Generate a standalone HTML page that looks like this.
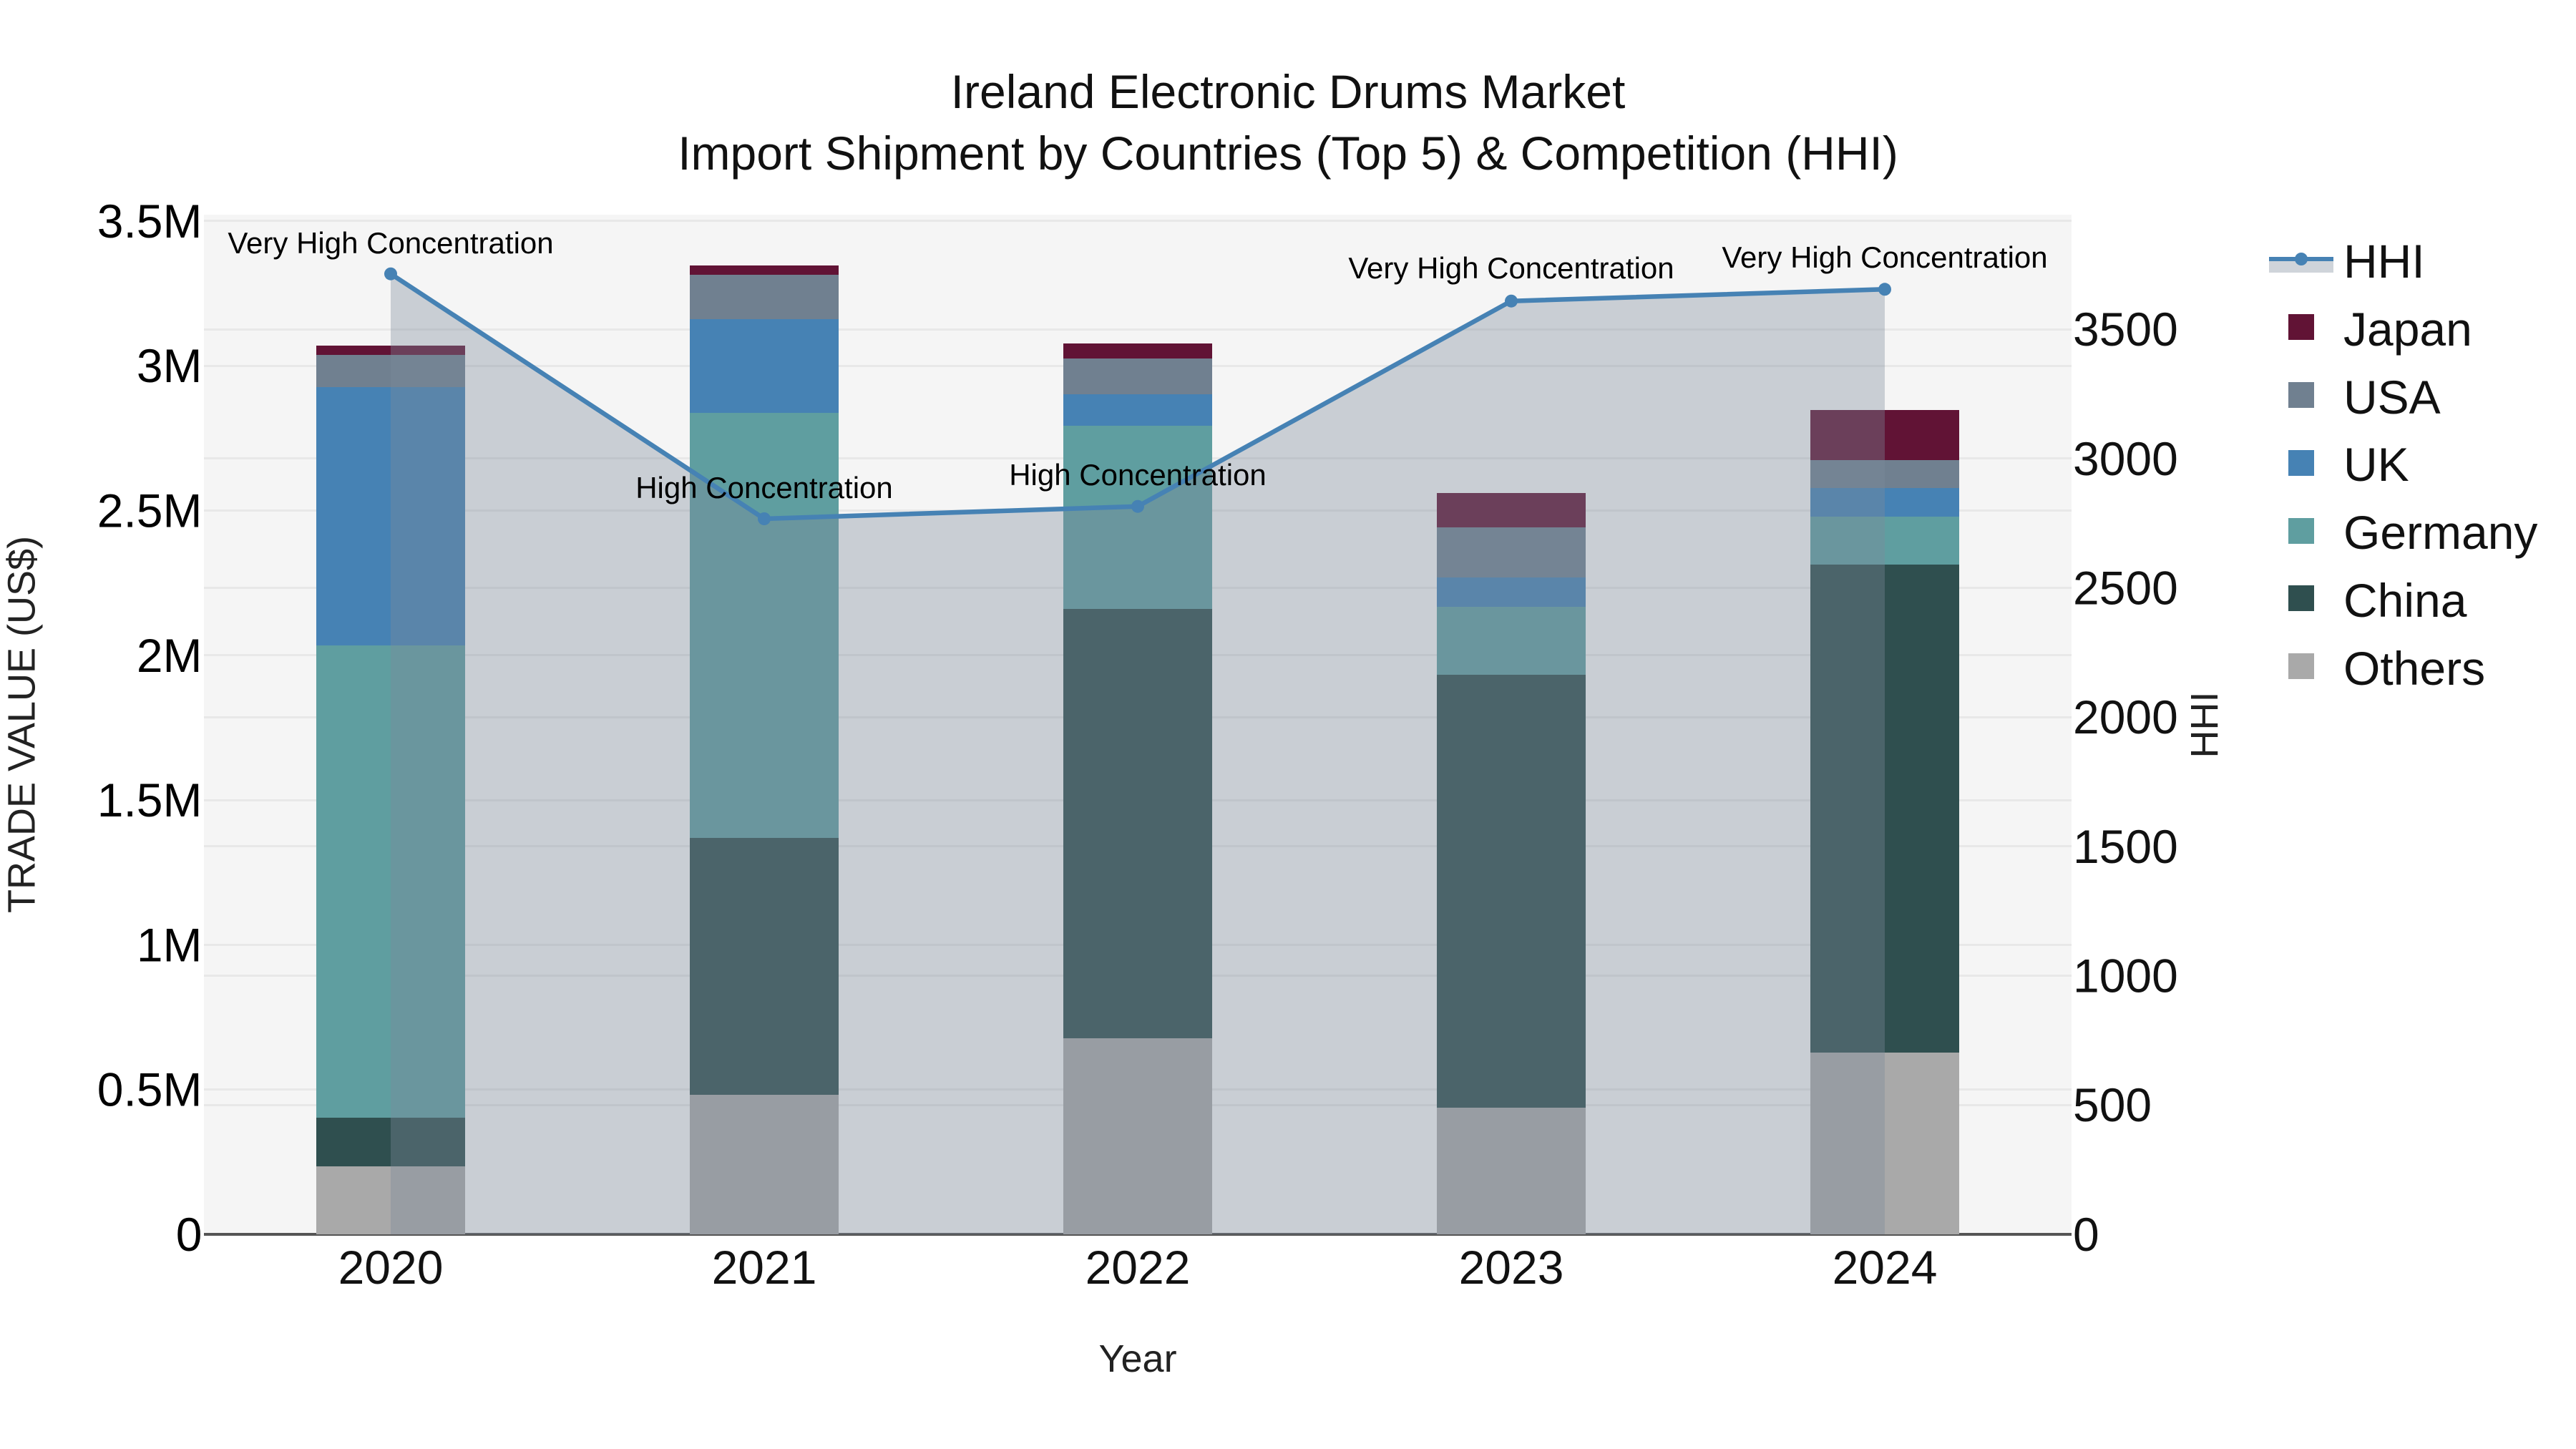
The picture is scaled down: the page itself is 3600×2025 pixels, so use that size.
<!DOCTYPE html>
<html>
<head>
<meta charset="utf-8">
<style>
html,body{margin:0;padding:0;background:#fff;width:3600px;height:2025px;overflow:hidden}
svg{display:block}
text{font-family:"Liberation Sans",Arial,sans-serif}
.t{font-size:66px;fill:#111}
.l{font-size:66px;fill:#000;text-anchor:end}
.r{font-size:66px;fill:#111}
.x{font-size:66px;fill:#111;text-anchor:middle}
.a{font-size:42px;fill:#000;text-anchor:middle}
.at{font-size:54px;fill:#222;text-anchor:middle}
.g{fill:#e8e8e8}
</style>
</head>
<body>
<svg width="3600" height="2025" viewBox="0 0 3600 2025" xmlns="http://www.w3.org/2000/svg">
<rect width="3600" height="2025" fill="#fff"/>
<rect x="285" y="300" width="2610" height="1425" fill="#f5f5f5"/>

<!-- gridlines -->
<g class="g">
<rect x="285" y="1521" width="2610" height="3"/>
<rect x="285" y="1319" width="2610" height="3"/>
<rect x="285" y="1117" width="2610" height="3"/>
<rect x="285" y="914" width="2610" height="3"/>
<rect x="285" y="712" width="2610" height="3"/>
<rect x="285" y="510" width="2610" height="3"/>
<rect x="285" y="307" width="2610" height="3"/>
<rect x="285" y="1543" width="2610" height="3"/>
<rect x="285" y="1362" width="2610" height="3"/>
<rect x="285" y="1181" width="2610" height="3"/>
<rect x="285" y="1001" width="2610" height="3"/>
<rect x="285" y="820" width="2610" height="3"/>
<rect x="285" y="639" width="2610" height="3"/>
<rect x="285" y="459" width="2610" height="3"/>
</g>
<rect x="285" y="1723" width="2610" height="4" fill="#555"/>

<!-- bars -->
<g shape-rendering="crispEdges">
<!-- 2020 -->
<rect x="442" y="483" width="208" height="13" fill="#611335"/>
<rect x="442" y="496" width="208" height="45" fill="#708090"/>
<rect x="442" y="541" width="208" height="361" fill="#4682b4"/>
<rect x="442" y="902" width="208" height="660" fill="#5f9ea0"/>
<rect x="442" y="1562" width="208" height="68" fill="#2f4f4f"/>
<rect x="442" y="1630" width="208" height="95" fill="#a9a9a9"/>
<!-- 2021 -->
<rect x="964" y="371" width="208" height="13" fill="#611335"/>
<rect x="964" y="384" width="208" height="62" fill="#708090"/>
<rect x="964" y="446" width="208" height="131" fill="#4682b4"/>
<rect x="964" y="577" width="208" height="594" fill="#5f9ea0"/>
<rect x="964" y="1171" width="208" height="359" fill="#2f4f4f"/>
<rect x="964" y="1530" width="208" height="195" fill="#a9a9a9"/>
<!-- 2022 -->
<rect x="1486" y="480" width="208" height="21" fill="#611335"/>
<rect x="1486" y="501" width="208" height="50" fill="#708090"/>
<rect x="1486" y="551" width="208" height="44" fill="#4682b4"/>
<rect x="1486" y="595" width="208" height="256" fill="#5f9ea0"/>
<rect x="1486" y="851" width="208" height="600" fill="#2f4f4f"/>
<rect x="1486" y="1451" width="208" height="274" fill="#a9a9a9"/>
<!-- 2023 -->
<rect x="2008" y="689" width="208" height="48" fill="#611335"/>
<rect x="2008" y="737" width="208" height="70" fill="#708090"/>
<rect x="2008" y="807" width="208" height="41" fill="#4682b4"/>
<rect x="2008" y="848" width="208" height="95" fill="#5f9ea0"/>
<rect x="2008" y="943" width="208" height="605" fill="#2f4f4f"/>
<rect x="2008" y="1548" width="208" height="177" fill="#a9a9a9"/>
<!-- 2024 -->
<rect x="2530" y="573" width="208" height="70" fill="#611335"/>
<rect x="2530" y="643" width="208" height="39" fill="#708090"/>
<rect x="2530" y="682" width="208" height="40" fill="#4682b4"/>
<rect x="2530" y="722" width="208" height="67" fill="#5f9ea0"/>
<rect x="2530" y="789" width="208" height="682" fill="#2f4f4f"/>
<rect x="2530" y="1471" width="208" height="254" fill="#a9a9a9"/>
</g>

<!-- HHI area and line -->
<polygon points="546,1725 546,382.7 1068,725 1590,707.7 2112,420.7 2634,404.3 2634,1725" fill="rgb(126,138,154)" fill-opacity="0.37"/>
<polyline points="546,382.7 1068,725 1590,707.7 2112,420.7 2634,404.3" fill="none" stroke="#4682b4" stroke-width="6.5" stroke-linejoin="round"/>
<g fill="#4682b4">
<circle cx="546" cy="382.7" r="9"/>
<circle cx="1068" cy="725" r="9"/>
<circle cx="1590" cy="707.7" r="9"/>
<circle cx="2112" cy="420.7" r="9"/>
<circle cx="2634" cy="404.3" r="9"/>
</g>

<!-- annotations -->
<text class="a" x="546" y="354">Very High Concentration</text>
<text class="a" x="1068" y="696">High Concentration</text>
<text class="a" x="1590" y="678">High Concentration</text>
<text class="a" x="2112" y="389">Very High Concentration</text>
<text class="a" x="2634" y="374">Very High Concentration</text>

<!-- title -->
<text class="t" x="1800" y="151" style="text-anchor:middle">Ireland Electronic Drums Market</text>
<text class="t" x="1800" y="237" style="text-anchor:middle">Import Shipment by Countries (Top 5) &amp; Competition (HHI)</text>

<!-- left ticks -->
<text class="l" x="282.5" y="332">3.5M</text>
<text class="l" x="282.5" y="534">3M</text>
<text class="l" x="282.5" y="736.5">2.5M</text>
<text class="l" x="282.5" y="939">2M</text>
<text class="l" x="282.5" y="1141">1.5M</text>
<text class="l" x="282.5" y="1343.5">1M</text>
<text class="l" x="282.5" y="1545.5">0.5M</text>
<text class="l" x="282.5" y="1748">0</text>

<!-- right ticks -->
<text class="r" x="2897" y="483">3500</text>
<text class="r" x="2897" y="664">3000</text>
<text class="r" x="2897" y="844.5">2500</text>
<text class="r" x="2897" y="1025">2000</text>
<text class="r" x="2897" y="1206">1500</text>
<text class="r" x="2897" y="1386.5">1000</text>
<text class="r" x="2897" y="1567">500</text>
<text class="r" x="2897" y="1748">0</text>

<!-- x ticks -->
<text class="x" x="546" y="1794">2020</text>
<text class="x" x="1068" y="1794">2021</text>
<text class="x" x="1590" y="1794">2022</text>
<text class="x" x="2112" y="1794">2023</text>
<text class="x" x="2634" y="1794">2024</text>

<!-- axis titles -->
<text class="at" x="1590" y="1917">Year</text>
<text class="at" transform="translate(48.5 1012.5) rotate(-90)">TRADE VALUE (US$)</text>
<text class="at" transform="translate(3099 1013) rotate(-90)">HHI</text>

<!-- legend -->
<rect x="3171" y="362" width="90" height="19" fill="rgb(126,138,154)" fill-opacity="0.37"/>
<rect x="3171" y="359" width="90" height="6" fill="#4682b4"/>
<circle cx="3216" cy="362" r="9" fill="#4682b4"/>
<text class="r" x="3275" y="388">HHI</text>
<g shape-rendering="crispEdges">
<rect x="3198" y="439" width="36" height="36" fill="#611335"/>
<rect x="3198" y="534" width="36" height="36" fill="#708090"/>
<rect x="3198" y="629" width="36" height="36" fill="#4682b4"/>
<rect x="3198" y="724" width="36" height="36" fill="#5f9ea0"/>
<rect x="3198" y="818" width="36" height="36" fill="#2f4f4f"/>
<rect x="3198" y="913" width="36" height="36" fill="#a9a9a9"/>
</g>
<text class="r" x="3275" y="483">Japan</text>
<text class="r" x="3275" y="578">USA</text>
<text class="r" x="3275" y="672">UK</text>
<text class="r" x="3275" y="767">Germany</text>
<text class="r" x="3275" y="862">China</text>
<text class="r" x="3275" y="957">Others</text>
</svg>
</body>
</html>
